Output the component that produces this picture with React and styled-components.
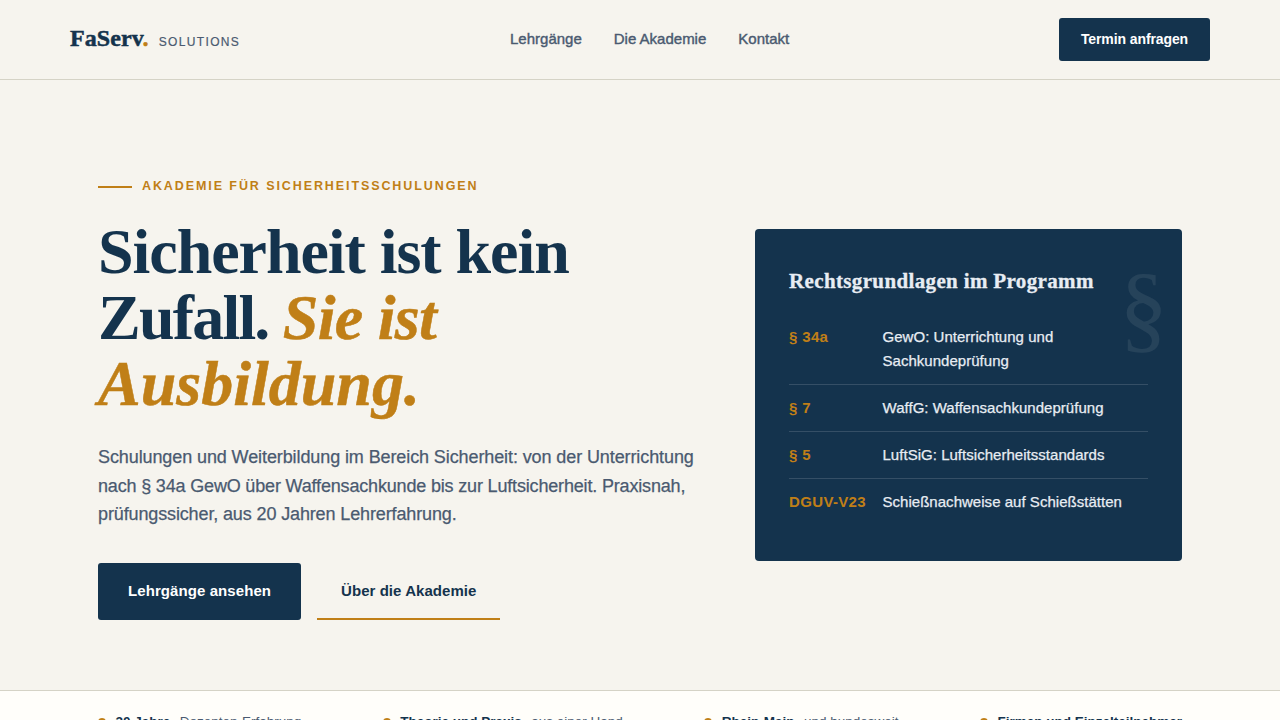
import React from "react";
import styled, { createGlobalStyle, css } from "styled-components";

const navy = "#14334d";
const gold = "#c07f17";
const slate = "#4a5a70";
const paper = "#f6f4ee";
const rule = "#d5d3c6";

const sans = '"Liberation Sans", Arial, sans-serif';
const serif = '"Liberation Serif", "Times New Roman", serif';

const laws = [
  { label: "§ 34a", text: "GewO: Unterrichtung und Sachkundeprüfung" },
  { label: "§ 7", text: "WaffG: Waffensachkundeprüfung" },
  { label: "§ 5", text: "LuftSiG: Luftsicherheitsstandards" },
  { label: "DGUV-V23", text: "Schießnachweise auf Schießstätten" }
];

const facts = [
  { strong: "20 Jahre", text: "Dozenten-Erfahrung" },
  { strong: "Theorie und Praxis", text: "aus einer Hand" },
  { strong: "Rhein-Main", text: "und bundesweit" },
  { strong: "Firmen und Einzelteilnehmer" }
];

const App = () => (
  <Page>
    <GlobalStyle />
    <Header>
      <Logo href="#">
        <LogoName>
          FaServ<LogoDot>.</LogoDot>
        </LogoName>
        <LogoSub>SOLUTIONS</LogoSub>
      </Logo>
      <Nav>
        <NavLink href="#">Lehrgänge</NavLink>
        <NavLink href="#">Die Akademie</NavLink>
        <NavLink href="#">Kontakt</NavLink>
      </Nav>
      <HeaderButton href="#">Termin anfragen</HeaderButton>
    </Header>

    <Hero>
      <Intro>
        <Eyebrow>AKADEMIE FÜR SICHERHEITSSCHULUNGEN</Eyebrow>
        <Title>
          <TitleLine $tracking="-1.05px">Sicherheit ist kein</TitleLine>
          <TitleLine $tracking="-1.8px">
            Zufall. <Accent $tracking="-0.7px">Sie ist</Accent>
          </TitleLine>
          <TitleLine>
            <Accent>Ausbildung.</Accent>
          </TitleLine>
        </Title>
        <Lead>
          <LeadLine $tracking="-0.1px">
            Schulungen und Weiterbildung im Bereich Sicherheit: von der
            Unterrichtung
          </LeadLine>
          <LeadLine $tracking="-0.17px">
            nach § 34a GewO über Waffensachkunde bis zur Luftsicherheit.
            Praxisnah,
          </LeadLine>
          <LeadLine $tracking="-0.13px">
            prüfungssicher, aus 20 Jahren Lehrerfahrung.
          </LeadLine>
        </Lead>
        <Actions>
          <Button href="#" $primary>
            Lehrgänge ansehen
          </Button>
          <Button href="#">Über die Akademie</Button>
        </Actions>
      </Intro>

      <Card>
        <CardMark aria-hidden="true">§</CardMark>
        <CardTitle>Rechtsgrundlagen im Programm</CardTitle>
        <LawList>
          {laws.map(law => (
            <Law key={law.label}>
              <LawLabel>{law.label}</LawLabel>
              <LawText>{law.text}</LawText>
            </Law>
          ))}
        </LawList>
      </Card>
    </Hero>

    <Strip>
      {facts.map(fact => (
        <Fact key={fact.strong}>
          <strong>{fact.strong}</strong>
          {fact.text && <span>{fact.text}</span>}
        </Fact>
      ))}
    </Strip>
  </Page>
);

export default App;

const GlobalStyle = createGlobalStyle`
  * {
    box-sizing: border-box;
  }

  body {
    margin: 0;
    background: ${paper};
    color: ${navy};
    font-family: ${sans};
  }

  a {
    color: inherit;
    text-decoration: none;
  }
`;

const Page = styled.div`
  height: 100vh;
  overflow: hidden;
`;

const Header = styled.header`
  display: flex;
  align-items: center;
  justify-content: space-between;
  height: 80px;
  padding: 0 70px;
  border-bottom: 1px solid ${rule};
`;

const Logo = styled.a`
  display: flex;
  align-items: baseline;
  gap: 10px;
  padding-bottom: 4px;
`;

const LogoName = styled.span`
  font: bold 24px/36px ${serif};
  letter-spacing: 0.1px;
  -webkit-text-stroke: 0.5px;
`;

const LogoDot = styled.span`
  color: ${gold};
`;

const LogoSub = styled.span`
  color: ${slate};
  font-size: 12px;
  letter-spacing: 1.35px;
  -webkit-text-stroke: 0.2px;
`;

const Nav = styled.nav`
  display: flex;
  gap: 32px;
  padding-bottom: 2px;
`;

const NavLink = styled.a`
  color: ${slate};
  font-size: 15px;
  line-height: 24px;
  -webkit-text-stroke: 0.4px;
`;

const HeaderButton = styled.a`
  width: 151px;
  border-radius: 3px;
  background: ${navy};
  color: white;
  font-size: 14px;
  font-weight: bold;
  line-height: 43px;
  letter-spacing: -0.1px;
  text-align: center;
`;

const Hero = styled.section`
  display: grid;
  grid-template-columns: 601px 427px;
  gap: 56px;
  align-items: center;
  justify-content: center;
  height: 610px;
  padding: 90px 0 70px;
`;

const Intro = styled.div`
  height: 450px;
`;

const Eyebrow = styled.div`
  display: flex;
  align-items: center;
  gap: 10px;
  color: ${gold};
  font-size: 12.5px;
  font-weight: bold;
  line-height: 32px;
  letter-spacing: 1.91px;
  white-space: nowrap;

  &::before {
    content: "";
    width: 34px;
    height: 2px;
    margin-top: 2px;
    background: ${gold};
  }
`;

const Title = styled.h1`
  margin: 17px 0 0;
  font: bold 64px/66px ${serif};
  white-space: nowrap;
`;

const TitleLine = styled.span`
  display: block;
  letter-spacing: ${props => props.$tracking || "0"};
`;

const Accent = styled.em`
  color: ${gold};
  letter-spacing: ${props => props.$tracking || "0"};
  -webkit-text-stroke: 0.5px;
`;

const Lead = styled.p`
  margin: 26px 0 0;
  color: ${slate};
  font-size: 18px;
  line-height: 28.6px;
  white-space: nowrap;
  -webkit-text-stroke: 0.25px;
`;

const LeadLine = styled.span`
  display: block;
  letter-spacing: ${props => props.$tracking};
`;

const Actions = styled.div`
  display: flex;
  gap: 16px;
  margin-top: 34px;
`;

const Button = styled.a`
  height: 57px;
  padding: 0 24px;
  border-bottom: 2px solid ${gold};
  font-size: 15px;
  font-weight: bold;
  line-height: 55px;
  letter-spacing: 0.05px;

  ${props =>
    props.$primary &&
    css`
      padding: 0 30px;
      border: 0;
      border-radius: 3px;
      background: ${navy};
      color: white;
      letter-spacing: 0.08px;
    `};
`;

const Card = styled.aside`
  position: relative;
  padding: 36px 34px;
  border-radius: 4px;
  background: ${navy};
  color: #e8edf3;
`;

const CardMark = styled.span`
  position: absolute;
  top: 25px;
  right: 14px;
  color: rgba(255, 255, 255, 0.08);
  font: 98px/106px ${serif};
`;

const CardTitle = styled.h2`
  margin: 0 0 17px;
  font: bold 21px/32px ${serif};
  letter-spacing: 0.36px;
  -webkit-text-stroke: 0.3px;
`;

const LawList = styled.ul`
  margin: 0;
  padding: 0;
  list-style: none;
`;

const Law = styled.li`
  display: grid;
  grid-template-columns: 93.5px 1fr;
  padding: 11px 0;
  font-size: 15px;
  line-height: 24px;

  & + & {
    border-top: 1px solid rgba(255, 255, 255, 0.14);
  }
`;

const LawLabel = styled.span`
  color: ${gold};
  font-weight: bold;
  letter-spacing: 0.35px;
`;

const LawText = styled.span`
  max-width: 240px;
  letter-spacing: 0.03px;
  -webkit-text-stroke: 0.25px;
`;

const Strip = styled.section`
  display: flex;
  justify-content: space-between;
  padding: 20px 98px;
  border-top: 1px solid ${rule};
  background: #fffefa;
  font-size: 13.5px;
  line-height: 22px;
`;

const Fact = styled.div`
  display: flex;
  align-items: center;
  gap: 9.5px;
  color: ${slate};

  &::before {
    content: "";
    width: 8px;
    height: 8px;
    margin-top: -1px;
    border-radius: 50%;
    background: ${gold};
  }

  strong {
    color: ${navy};
  }
`;
